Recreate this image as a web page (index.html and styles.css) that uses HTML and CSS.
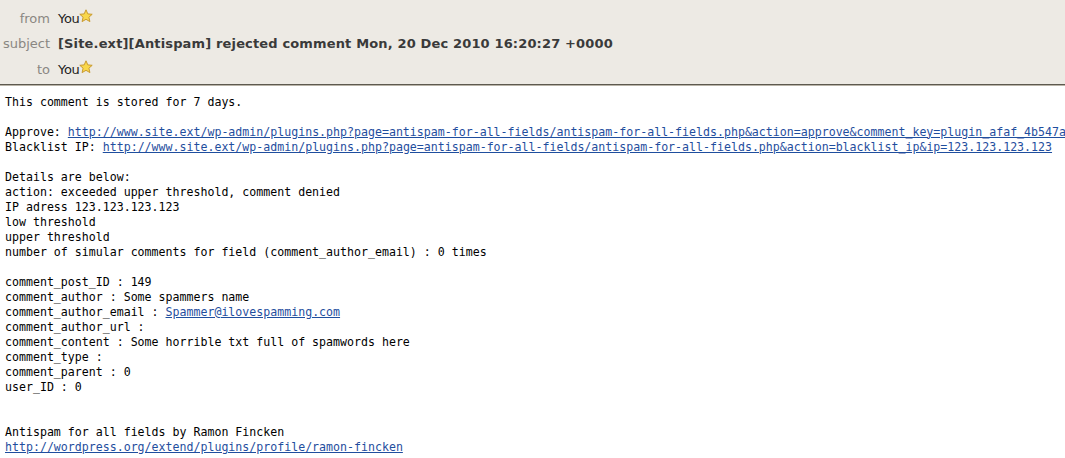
FILE: index.html
```html
<!DOCTYPE html>
<html>
<head>
<meta charset="utf-8">
<link rel="stylesheet" href="styles.css">
</head>
<body>
<div class="header">
  <div class="label">from</div>
  <div class="value">You<svg class="star" viewBox="0 0 14 14"><polygon points="7,0.8 8.8,4.9 13.2,5.3 9.9,8.2 10.9,12.6 7,10.3 3.1,12.6 4.1,8.2 0.8,5.3 5.2,4.9" fill="#f9d74a" stroke="#c99a2e" stroke-width="1" stroke-linejoin="round"/></svg></div>
  <div class="label">subject</div>
  <div class="value subject">[Site.ext][Antispam] rejected comment Mon, 20 Dec 2010 16:20:27 +0000</div>
  <div class="label">to</div>
  <div class="value">You<svg class="star" viewBox="0 0 14 14"><polygon points="7,0.8 8.8,4.9 13.2,5.3 9.9,8.2 10.9,12.6 7,10.3 3.1,12.6 4.1,8.2 0.8,5.3 5.2,4.9" fill="#f9d74a" stroke="#c99a2e" stroke-width="1" stroke-linejoin="round"/></svg></div>
</div>
<pre class="message">This comment is stored for 7 days.

Approve: <a href="#">http://www.site.ext/wp-admin/plugins.php?page=antispam-for-all-fields/antispam-for-all-fields.php&amp;action=approve&amp;comment_key=plugin_afaf_4b547a9c1e2d</a>
Blacklist IP: <a href="#">http://www.site.ext/wp-admin/plugins.php?page=antispam-for-all-fields/antispam-for-all-fields.php&amp;action=blacklist_ip&amp;ip=123.123.123.123</a>

Details are below:
action: exceeded upper threshold, comment denied
IP adress 123.123.123.123
low threshold
upper threshold
number of simular comments for field (comment_author_email) : 0 times

comment_post_ID : 149
comment_author : Some spammers name
comment_author_email : <a href="#">Spammer@ilovespamming.com</a>
comment_author_url :
comment_content : Some horrible txt full of spamwords here
comment_type :
comment_parent : 0
user_ID : 0


Antispam for all fields by Ramon Fincken
<a href="#">http://wordpress.org/extend/plugins/profile/ramon-fincken</a></pre>
</body>
</html>
```
FILE: styles.css
```css
html, body {
  margin: 0;
  padding: 0;
  background: #ffffff;
  overflow: hidden;
}
body {
  width: 1065px;
  height: 458px;
}
.header {
  display: grid;
  grid-template-columns: 50px 1fr;
  column-gap: 8px;
  grid-auto-rows: 25.5px;
  align-items: center;
  padding: 5.5px 0 1.5px 0;
  background: #edeae4;
  border-bottom: 1px solid #5d594f;
  box-shadow: 0 1px 0 #b9b4a8;
  font-family: "DejaVu Sans", sans-serif;
  font-size: 13px;
}
.label {
  text-align: right;
  color: #8a8782;
}
.value {
  color: #222;
  display: flex;
  align-items: center;
  white-space: nowrap;
  letter-spacing: -0.3px;
}
.subject {
  font-weight: bold;
  color: #3a3a3a;
  letter-spacing: 0.15px;
}
.star {
  width: 14px;
  height: 14px;
  margin-left: -1px;
  margin-top: -4px;
}
.message {
  margin: 0;
  padding: 10px 5px 0 5px;
  font-family: "DejaVu Sans Mono", monospace;
  font-size: 11.6px;
  line-height: 15px;
  color: #000;
  white-space: pre;
  overflow: hidden;
}
.message a {
  color: #1f4e9e;
  text-decoration: underline;
}
```
